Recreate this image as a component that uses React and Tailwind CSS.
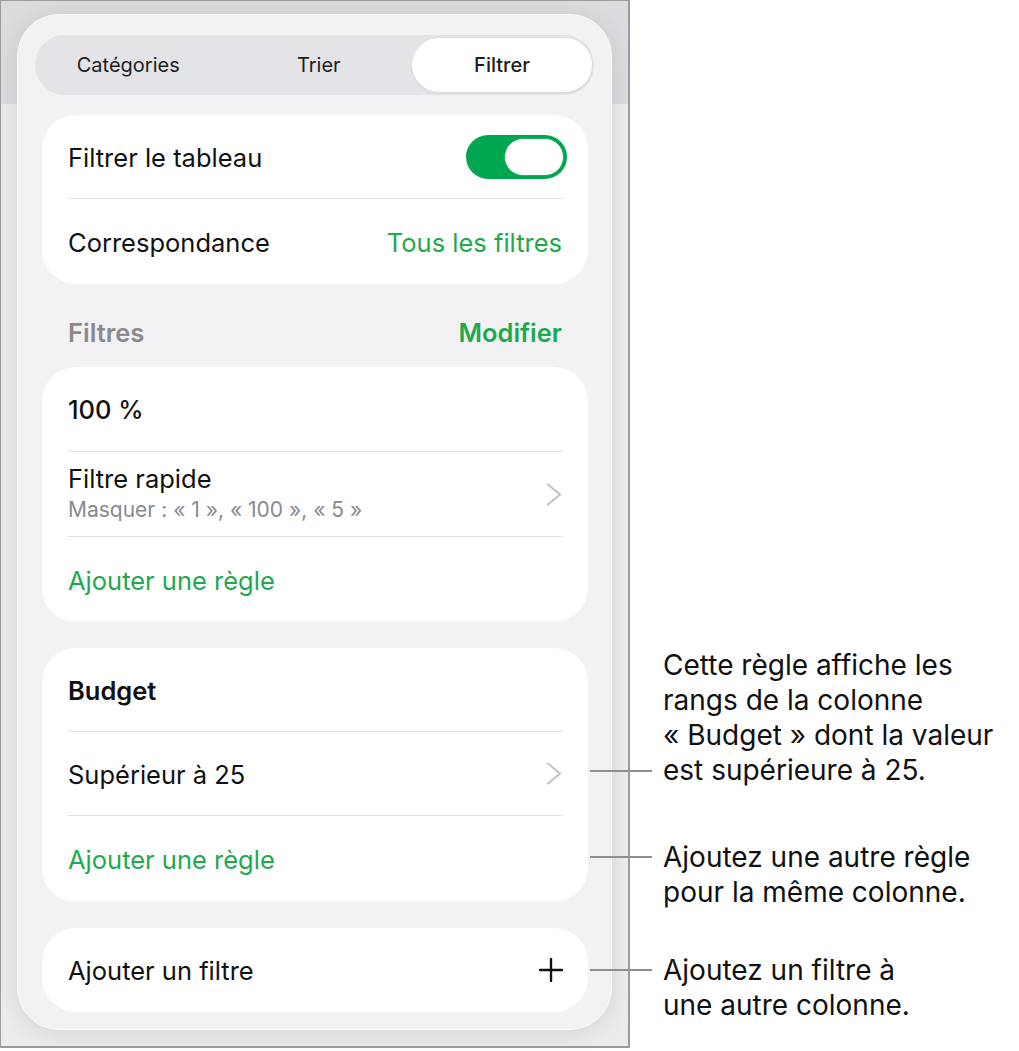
const font = { fontFamily: 'Inter, "Noto Sans", sans-serif' };

const Divider = () => <div className="ml-[26px] mr-[25px] h-px bg-[#e2e2e6]" />;

const Row = ({ children, h = 'h-[84px]' }) => (
  <div className={`${h} flex items-center justify-between pl-[26px] pr-[26px] pt-[3px]`}>{children}</div>
);

const Card = ({ children }) => (
  <div className="bg-white rounded-[34px] overflow-hidden">{children}</div>
);

const Chevron = () => (
  <svg width="17" height="23" viewBox="0 0 17 23" fill="none" className="-mr-[1px] -mt-[3px]">
    <polyline points="2,1.5 14,11.5 2,21.5" stroke="#c4c4c8" strokeWidth="2.2" strokeLinecap="round" strokeLinejoin="round" />
  </svg>
);

const PlusIcon = () => (
  <svg width="24" height="24" viewBox="0 0 24 24" fill="none" className="-mr-[1px] -mt-[3px]">
    <path d="M12 1v22M1 12h22" stroke="#111" strokeWidth="2.4" strokeLinecap="round" />
  </svg>
);

const callouts = [
  { top: 648, line: 771, lines: ['Cette règle affiche les', 'rangs de la colonne', '« Budget » dont la valeur', 'est supérieure à 25.'] },
  { top: 840, line: 857, lines: ['Ajoutez une autre règle', 'pour la même colonne.'] },
  { top: 953, line: 970, lines: ['Ajoutez un filtre à', 'une autre colonne.'] },
];

export default function App() {
  return (
    <div className="relative w-[1019px] h-[1051px] bg-white" style={font}>
      <div className="w-[630px] h-[1048px] border-2 border-t border-l border-[#9c9c9c] bg-[linear-gradient(to_bottom,#dcdce0_103px,#ececec_103px)] pt-[13px] pl-[16px]">
        <div className="w-[595px] h-[1016px] rounded-[42px] bg-[#f2f2f4] shadow-[0_4px_24px_rgba(0,0,0,0.10)] border border-[#fafafa] px-[17px] pt-[20px] flex flex-col">
          {/* segmented control */}
          <div className="h-[60px] rounded-full bg-[#e3e3e8] py-[3px] pr-[2px] flex text-[20px] text-[#1c1c1e]">
            <div className="flex-1 flex items-center justify-center pr-[4px]">Catégories</div>
            <div className="flex-1 flex items-center justify-center">Trier</div>
            <div className="w-[180px] flex items-center justify-center rounded-full bg-white font-medium shadow-[0_1px_3px_rgba(0,0,0,0.08)]">Filtrer</div>
          </div>

          <div className="pl-[7px] pr-[6px] pt-[20px] flex flex-col text-[25.5px] text-[#111]">
            <Card>
              <Row h="h-[83px]">
                <span>Filtrer le tableau</span>
                <div className="w-[101px] h-[44px] rounded-full bg-[#00a650] p-[3px] flex justify-end -mr-[5px] -mt-[3px]">
                  <div className="w-[60px] h-[38px] rounded-full bg-white border border-[#1fae5a]" />
                </div>
              </Row>
              <Divider />
              <Row h="h-[85px]">
                <span>Correspondance</span>
                <span className="text-[#1fa94e]">Tous les filtres</span>
              </Row>
            </Card>

            <div className="h-[83px] flex items-end justify-between px-[26px] pb-[15px] font-semibold">
              <span className="text-[#8a8a8e]">Filtres</span>
              <span className="text-[#1fa94e]">Modifier</span>
            </div>

            <Card>
              <Row>
                <span className="font-medium">100 %</span>
              </Row>
              <Divider />
              <Row>
                <div className="flex flex-col leading-[30px] -mt-[3px]">
                  <span>Filtre rapide</span>
                  <span className="text-[21px] leading-[28px] mt-[2px] text-[#8a8a8e]">Masquer : « 1 », « 100 », « 5 »</span>
                </div>
                <Chevron />
              </Row>
              <Divider />
              <Row h="h-[85px]">
                <span className="text-[#1fa94e]">Ajouter une règle</span>
              </Row>
            </Card>

            <div className="h-[26px]" />

            <Card>
              <Row h="h-[83px]">
                <span className="font-semibold">Budget</span>
              </Row>
              <Divider />
              <Row h="h-[83px]">
                <span>Supérieur à 25</span>
                <Chevron />
              </Row>
              <Divider />
              <Row h="h-[86px]">
                <span className="text-[#1fa94e]">Ajouter une règle</span>
              </Row>
            </Card>

            <div className="h-[26px]" />

            <Card>
              <Row>
                <span>Ajouter un filtre</span>
                <PlusIcon />
              </Row>
            </Card>
          </div>
        </div>
      </div>

      {callouts.map((c) => (
        <div key={c.line}>
          <div className="absolute left-[590px] w-[62px] h-[2px] bg-[#8e8e8e]" style={{ top: c.line - 1 }} />
          <div className="absolute left-[663px] text-[28px] leading-[35px] text-[#111]" style={{ top: c.top }}>
            {c.lines.map((l) => (
              <div key={l}>{l}</div>
            ))}
          </div>
        </div>
      ))}
    </div>
  );
}
